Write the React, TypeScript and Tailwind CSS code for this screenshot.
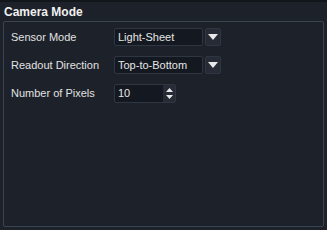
import React from 'react';

function Combo({ value }: { value: string }) {
  return (
    <div className="flex items-center gap-[2px]">
      <div className="w-[89px] h-[18px] bg-[#141820] border border-[#2f3641] rounded-[2px] flex items-center px-[3px] text-[11px] text-[#e6e6e6]">
        {value}
      </div>
      <div className="w-[16px] h-[18px] bg-[#262b35] border border-[#2f3641] rounded-[2px] flex items-center justify-center">
        <svg width="10" height="6" viewBox="0 0 10 6">
          <path d="M0 0 H10 L5 6 Z" fill="#e8e8e8" />
        </svg>
      </div>
    </div>
  );
}

function SpinBox({ value }: { value: string }) {
  return (
    <div className="w-[62px] h-[19px] bg-[#141820] border border-[#2f3641] rounded-[2px] flex items-center">
      <div className="flex-1 px-[3px] text-[11px] text-[#e6e6e6]">{value}</div>
      <div className="w-[12px] h-full bg-[#262b35] flex flex-col items-center justify-center gap-[3px]">
        <svg width="7" height="4" viewBox="0 0 7 4"><path d="M0 4 H7 L3.5 0 Z" fill="#e8e8e8" /></svg>
        <svg width="7" height="4" viewBox="0 0 7 4"><path d="M0 0 H7 L3.5 4 Z" fill="#e8e8e8" /></svg>
      </div>
    </div>
  );
}

export default function App() {
  const rows = [
    { label: 'Sensor Mode', el: <Combo value="Light-Sheet" /> },
    { label: 'Readout Direction', el: <Combo value="Top-to-Bottom" /> },
    { label: 'Number of Pixels', el: <SpinBox value="10" /> },
  ];
  return (
    <div className="w-[327px] h-[230px] bg-[#1d212a] border-t-2 border-[#12151a] flex flex-col px-[3px] pb-[3px]" style={{ fontFamily: '"Liberation Sans", Arial, sans-serif' }}>
      <div className="h-[19px] flex items-center text-[12px] font-bold text-[#f0f0f0] pl-[1px]">Camera Mode</div>
      <div className="flex-1 border border-[#3a4350] rounded-[2px] pt-[6px] pl-[7px] flex flex-col gap-[10px]">
        {rows.map(r => (
          <div key={r.label} className="flex items-center">
            <div className="w-[103px] text-[11px] text-[#e2e2e2]">{r.label}</div>
            {r.el}
          </div>
        ))}
      </div>
    </div>
  );
}
